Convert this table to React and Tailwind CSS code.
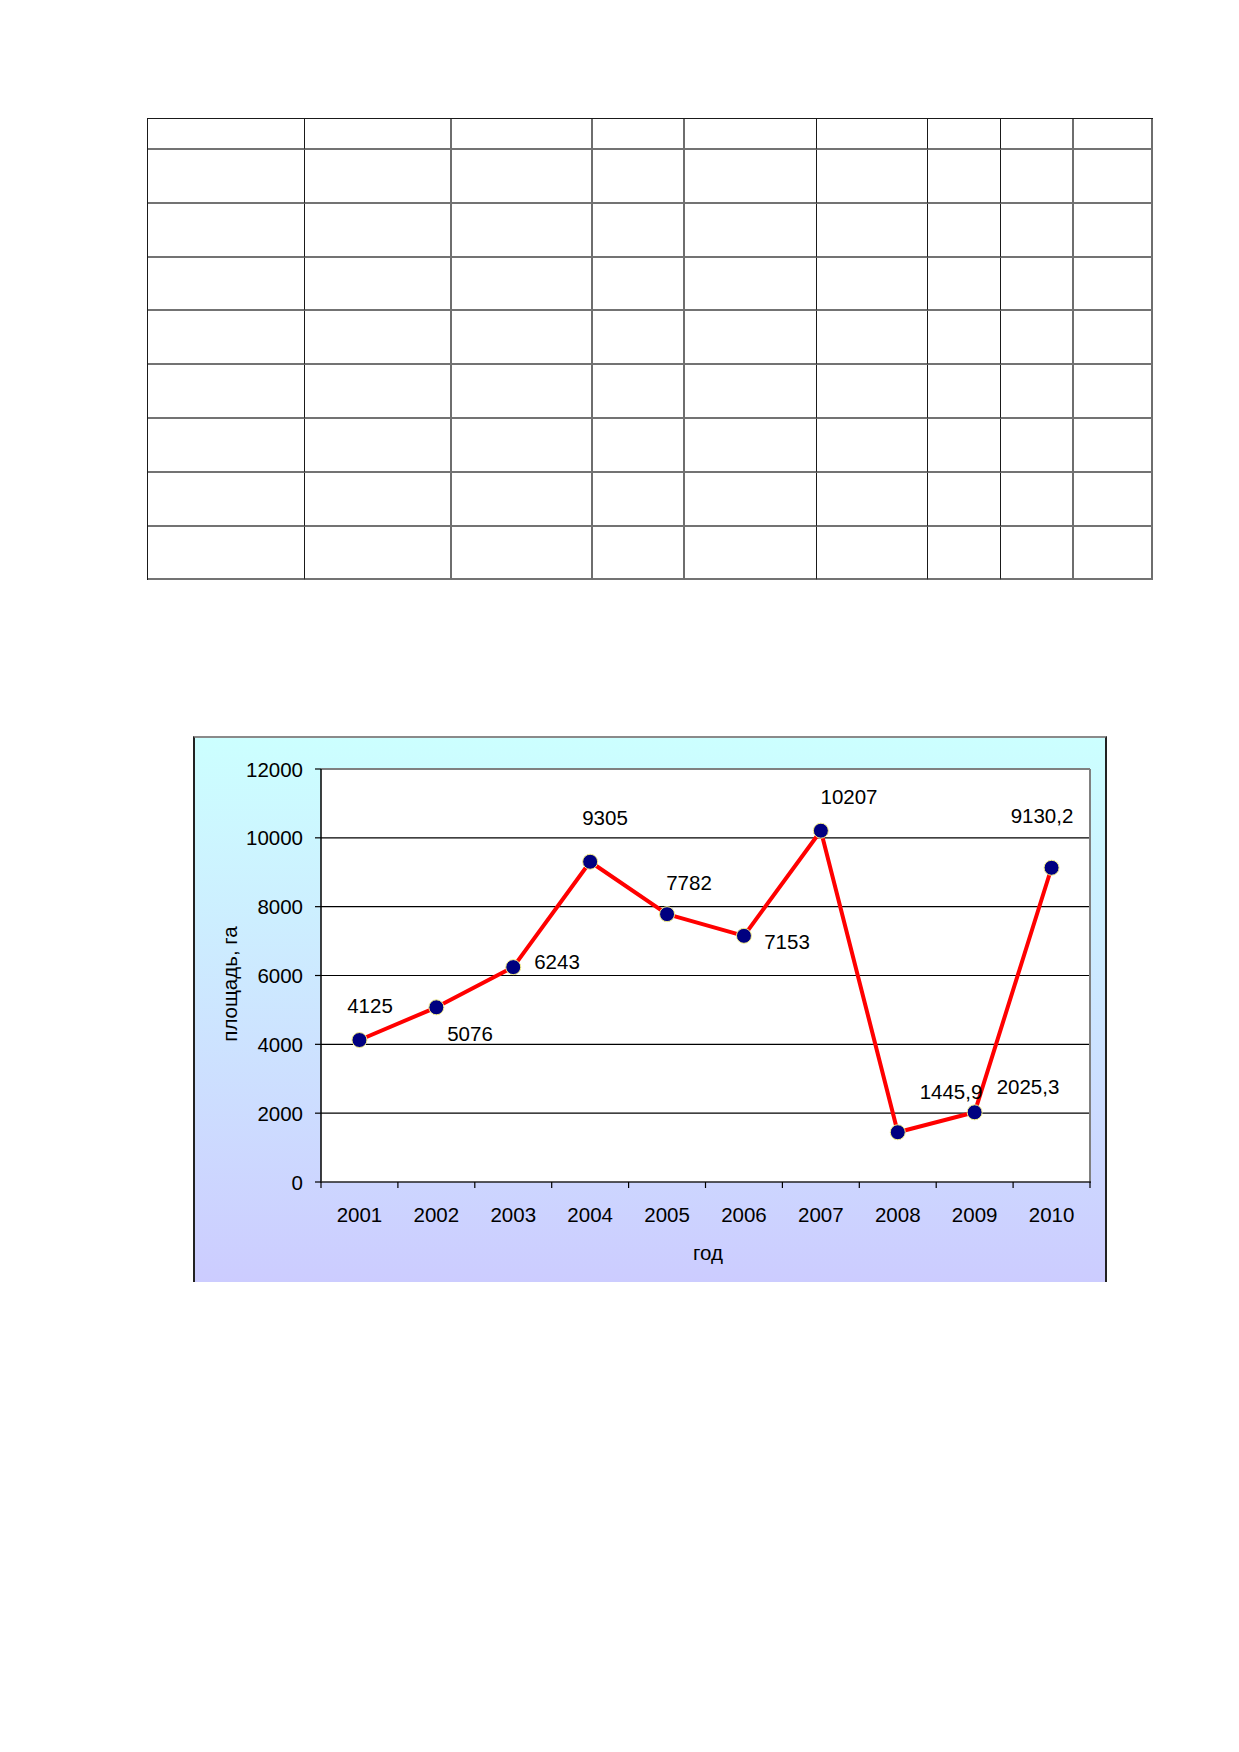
import React from 'react';

// right edge of each table column: dark thin rule or grey thick rule
const DARK = 'border-r border-r-[#1a1a1a]';
const GREY = 'border-r-2 border-r-[#6e6e6e]';
const colEdges = [DARK, GREY, GREY, GREY, DARK, DARK, DARK, GREY, GREY];
const ROWS = 9;

const years = [2001, 2002, 2003, 2004, 2005, 2006, 2007, 2008, 2009, 2010];
const values = [4125, 5076, 6243, 9305, 7782, 7153, 10207, 1445.9, 2025.3, 9130.2];
const labels = [
    { t: '4125', x: 177, y: 269 },
    { t: '5076', x: 277, y: 297 },
    { t: '6243', x: 364, y: 225 },
    { t: '9305', x: 412, y: 81 },
    { t: '7782', x: 496, y: 146 },
    { t: '7153', x: 594, y: 205 },
    { t: '10207', x: 656, y: 60 },
    { t: '1445,9', x: 758, y: 355 },
    { t: '2025,3', x: 835, y: 350 },
    { t: '9130,2', x: 849, y: 79 },
];

const PL = 128, PT = 33, PR = 897, PB = 446;
const cw = (PR - PL) / 10;
const px = (i) => PL + cw * (i + 0.5);
const py = (v) => PB - (v * (PB - PT)) / 12000;

const Grid = () => (
    <div className="ml-[147px] w-fit grid grid-cols-[157px_147px_141px_92px_132px_111px_73px_73px_79px] grid-rows-[31px_repeat(8,53.8px)] border-l border-t border-l-[#1a1a1a] border-t-[#1a1a1a]">
        {Array.from({ length: ROWS }).map((_, r) =>
            colEdges.map((edge, c) => (
                <div key={`${r}-${c}`} className={`border-b-2 border-b-[#737373] ${edge}`} />
            ))
        )}
    </div>
);

const Chart = () => {
    const pts = values.map((v, i) => [px(i), py(v)]);
    return (
        <div className="ml-[193px] mt-[156px] w-[914px] h-[546px] bg-linear-to-b from-[#ccffff] to-[#ccccff] border-l-2 border-r-2 border-t-2 border-l-[#222] border-r-[#222] border-t-[#8a8a8a]">
            <svg
                width="910"
                height="544"
                viewBox="2 2 910 544"
                className="font-['Liberation_Sans',Arial,sans-serif] text-[20.5px]"
            >
                <rect x={PL} y={PT} width={PR - PL} height={PB - PT} fill="#fff" />
                {[2000, 4000, 6000, 8000, 10000].map((g) => (
                    <line key={g} x1={PL} x2={PR} y1={py(g)} y2={py(g)} stroke="#000" strokeWidth="1.2" />
                ))}
                <line x1={PL} x2={PR} y1={PT} y2={PT} stroke="#808080" strokeWidth="2" />
                <line x1={PR} x2={PR} y1={PT} y2={PB} stroke="#808080" strokeWidth="2" />
                <line x1={PL} x2={PL} y1={PT} y2={PB + 0.5} stroke="#000" strokeWidth="1.5" />
                <line x1={PL} x2={PR + 1} y1={PB} y2={PB} stroke="#222" strokeWidth="1.5" />
                {[0, 2000, 4000, 6000, 8000, 10000, 12000].map((g) => (
                    <g key={g}>
                        <line x1={PL - 6} x2={PL} y1={py(g)} y2={py(g)} stroke="#000" strokeWidth="1.2" />
                        <text x={110} y={py(g)} dominantBaseline="central" textAnchor="end" fill="#000">
                            {g}
                        </text>
                    </g>
                ))}
                {years.map((y, i) => (
                    <g key={y}>
                        <line x1={PL + cw * i} x2={PL + cw * i} y1={PB} y2={PB + 6} stroke="#000" strokeWidth="1.2" />
                        <text x={px(i)} y={478} dominantBaseline="central" textAnchor="middle" fill="#000">
                            {y}
                        </text>
                    </g>
                ))}
                <line x1={PR} x2={PR} y1={PB} y2={PB + 6} stroke="#000" strokeWidth="1.2" />
                <text x={515} y={516} dominantBaseline="central" textAnchor="middle" fill="#000">
                    год
                </text>
                <text
                    x={36}
                    y={248}
                    dominantBaseline="central"
                    textAnchor="middle"
                    fill="#000"
                    transform="rotate(-90 36 248)"
                >
                    площадь, га
                </text>
                <polyline
                    points={pts.map((p) => p.join(',')).join(' ')}
                    fill="none"
                    stroke="#ff0000"
                    strokeWidth="4"
                    strokeLinejoin="round"
                />
                {pts.map(([x, y], i) => (
                    <circle key={i} cx={x} cy={y} r="7.5" fill="#000080" stroke="#f5f08a" strokeWidth="1" />
                ))}
                {labels.map((l) => (
                    <text key={l.t} x={l.x} y={l.y} dominantBaseline="central" textAnchor="middle" fill="#000">
                        {l.t}
                    </text>
                ))}
            </svg>
        </div>
    );
};

export default function App() {
    return (
        <div className="w-[1239px] h-[1752px] bg-white pt-[118px]">
            <Grid />
            <Chart />
        </div>
    );
}
